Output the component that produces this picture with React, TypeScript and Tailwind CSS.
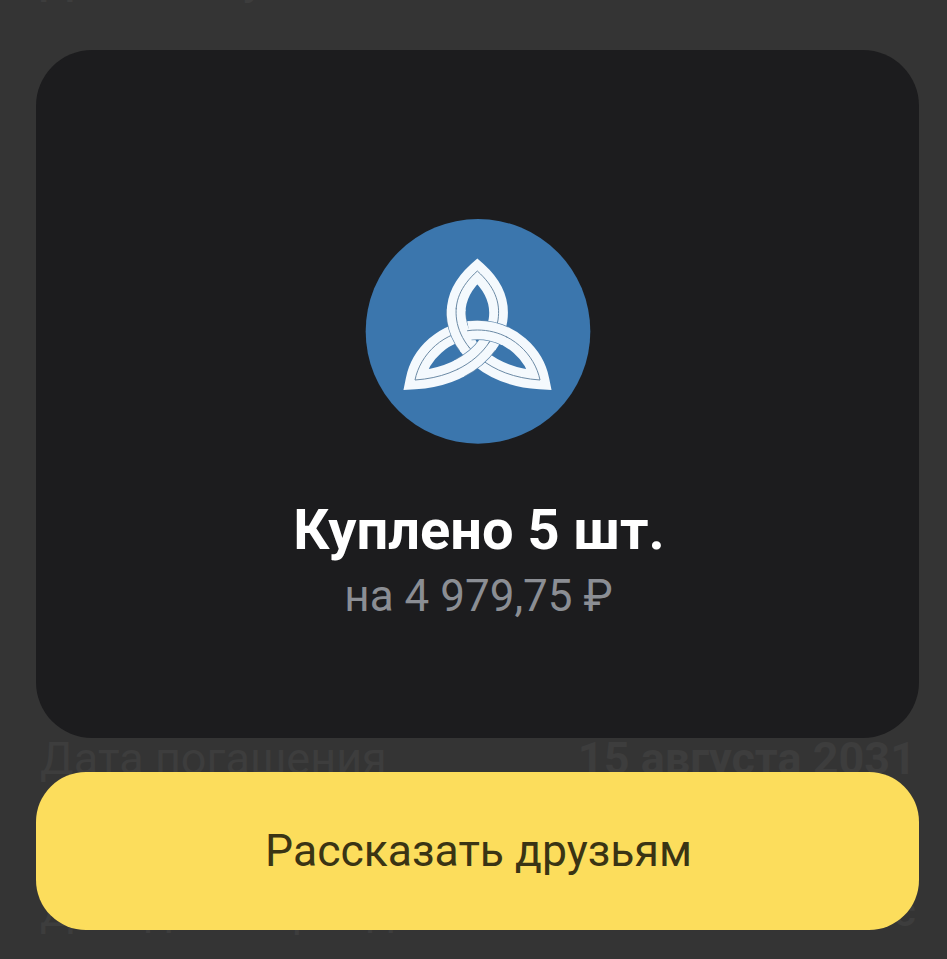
const ARC_A = 'M352 168 C 300 215 282 262 290 315 C 302 395 385 485 540 495'
const ARC_B = 'M352 168 C 404 215 422 262 414 315 C 402 395 319 485 165 495'
const ARC_C = 'M165 495 C 180 420 250 345 352 345 C 454 345 525 420 540 495'
const OUTLINE =
  'M352 168 C 300 215 282 262 290 315 C 302 395 385 485 540 495 C 525 420 454 345 352 345 C 250 345 180 420 165 495 C 319 485 402 395 414 315 C 422 262 404 215 352 168 Z'

// кусок ленты поверх другой в месте пересечения
function Crossing({ d, from, to }: { d: string; from: number; to: number }) {
  const edge = `0 ${from} ${to - from} 100`
  const fill = `0 ${from - 1} ${to - from + 2} 100`
  const line = `0 ${from - 2} ${to - from + 4} 100`
  return (
    <g fill="none">
      <path d={d} pathLength={100} strokeDasharray={edge} stroke="#5d86ab" strokeWidth={60} />
      <path d={d} pathLength={100} strokeDasharray={fill} stroke="#f4f9fd" strokeWidth={56} />
      <path d={d} pathLength={100} strokeDasharray={line} stroke="#6b8aa5" strokeWidth={3} />
    </g>
  )
}

function Logo() {
  return (
    <svg viewBox="0 0 705 705" className="h-[235px] w-[235px]">
      <circle cx="354" cy="349" r="337" fill="#3b76ad" />
      <path d={OUTLINE} fill="none" stroke="#f4f9fd" strokeWidth={56} strokeLinejoin="miter" strokeMiterlimit={10} />
      <path d={OUTLINE} fill="none" stroke="#6b8aa5" strokeWidth={3} />
      <Crossing d={ARC_A} from={28} to={50} />
      <Crossing d={ARC_B} from={50} to={72} />
      <Crossing d={ARC_C} from={46} to={66} />
    </svg>
  )
}

export default function App() {
  return (
    <div className="relative h-[959px] overflow-hidden bg-[#343434] font-['Roboto',sans-serif]">
      {/* список под затемнением */}
      <div className="absolute inset-x-0 top-0 pl-10 pr-[31px] text-[45px] font-medium leading-[48px] text-[#3d3d3d]">
        <div className="-mt-[45px]">Дата выпуска</div>
        <div className="mt-[732px] flex justify-between">
          <span className="font-normal">Дата погашения</span>
          <span className="font-bold">15 августа 2031</span>
        </div>
        <div className="mt-[104px] flex justify-between">
          <span className="font-normal">Доход за период</span>
          <span>12 мес</span>
        </div>
      </div>

      <div className="relative flex flex-col gap-[34px] pl-9 pr-7 pt-[50px]">
        <div className="flex h-[688px] flex-col items-center rounded-[56px] bg-[#1c1c1e] pt-[165px]">
          <Logo />
          <h1 className="ml-[3px] mt-[48px] text-[56px] font-bold leading-[64px] text-white">Куплено 5 шт.</h1>
          <p className="ml-[2px] mt-[8px] text-[44px] leading-[52px] text-[#8b8e94]">на 4 979,75 ₽</p>
        </div>
        <button className="h-[158px] rounded-[50px] bg-[#fcdd5c] pl-[2px] text-[44.5px] text-[#3a3414]">
          Рассказать друзьям
        </button>
      </div>
    </div>
  )
}
